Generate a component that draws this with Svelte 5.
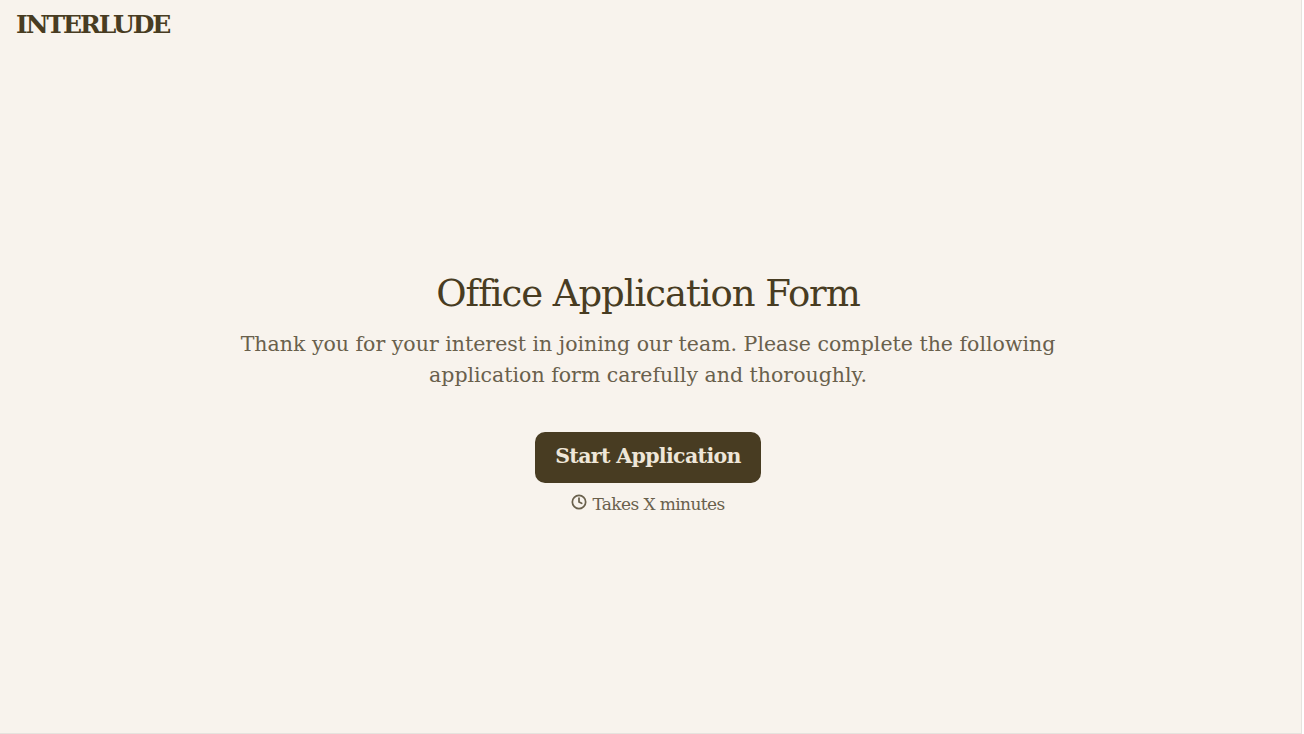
<script>
  const title = 'Office Application Form'
</script>

<div class="page">
  <header class="top">
    <span class="logo">INTERLUDE</span>
  </header>

  <main class="intro">
    <h1>{title}</h1>
    <p class="lead">
      Thank you for your interest in joining our team. Please complete the following
      application form carefully and thoroughly.
    </p>
    <button class="start">Start Application</button>
    <div class="time">
      <svg viewBox="0 0 24 24" width="16" height="16" fill="none" stroke="currentColor" stroke-width="2.6" stroke-linecap="round" stroke-linejoin="round">
        <circle cx="12" cy="12" r="10" />
        <path d="M12 6v6l4 2" />
      </svg>
      <span>Takes X minutes</span>
    </div>
  </main>
</div>

<style>
  :global(body) {
    margin: 0;
    background: #ffffff;
  }

  .page {
    box-sizing: border-box;
    width: 1302px;
    height: 734px;
    border-right: 1px solid #e6e3de;
    border-bottom: 1px solid #e6e3de;
    background: #f8f3ed;
    color: #483c22;
    font-family: "DejaVu Serif", "Liberation Serif", serif;
    display: flex;
    flex-direction: column;
  }

  .top {
    padding: 10px 16px;
  }

  .logo {
    display: block;
    font-size: 25px;
    line-height: 30px;
    font-weight: 700;
    letter-spacing: -2.05px;
  }

  .intro {
    width: 1296px;
    display: flex;
    flex-direction: column;
    align-items: center;
    text-align: center;
    padding-top: 220px;
  }

  h1 {
    margin: 0;
    font-size: 37px;
    line-height: 48px;
    font-weight: 400;
    letter-spacing: -1.05px;
  }

  .lead {
    margin: 11px 0 0;
    width: 830px;
    font-size: 20.5px;
    line-height: 31px;
    letter-spacing: 0;
    color: #69604c;
  }

  .start {
    margin-top: 41px;
    width: 226px;
    height: 51px;
    border: 0;
    border-radius: 10px;
    background: #483c22;
    color: #eee6d8;
    font: 700 20.5px "DejaVu Serif", serif;
    letter-spacing: -0.65px;
    padding: 0 0 3px;
  }

  .time {
    margin-top: 9px;
    display: flex;
    align-items: center;
    gap: 5px;
    font-size: 17px;
    line-height: 24px;
    letter-spacing: -0.6px;
    color: #69604c;
  }

  .time svg {
    margin-top: -4px;
  }
</style>
